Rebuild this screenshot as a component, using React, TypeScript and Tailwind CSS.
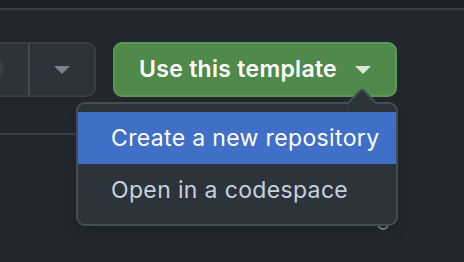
import React from 'react';

function Caret({ className }: { className?: string }) {
  return (
    <svg width="16" height="8" viewBox="0 0 16 8" className={className}>
      <path d="M0 0h16L8 8z" fill="currentColor" />
    </svg>
  );
}

export default function App() {
  return (
    <div
      className="relative w-[464px] h-[262px] overflow-hidden bg-[#22272e]"
      style={{ fontFamily: 'Inter, "Noto Sans", sans-serif' }}
    >
      <div className="h-[10px] bg-[#1c2128] border-b-2 border-[#373e47]" />

      <div className="flex items-start gap-[17px] mt-[32px] -ml-[40px]">
        {/* split button on the left */}
        <div className="flex h-[55px] w-[136px] rounded-[9px] border-2 border-[#373e47] bg-[#2d333b]">
          <div className="flex w-[68px] items-center border-r-2 border-[#444c56]">
            <div className="ml-[16px] h-[26px] w-[26px] rounded-full bg-[#373e47]" />
          </div>
          <div className="flex flex-1 items-center justify-center text-[#768390]">
            <Caret />
          </div>
        </div>

        {/* primary button */}
        <button className="flex h-[55px] w-[284px] items-center justify-center gap-[18px] rounded-[9px] border-2 border-[#5a9956] bg-[#4f8a4a] text-[23px] font-semibold tracking-[0.3px] text-white">
          <span>Use this template</span>
          <Caret className="text-[#dbe8d9] mt-[1px]" />
        </button>
      </div>

      <div className="mt-[36px] w-[100px] border-b-2 border-[#373e47]" />

      {/* small icon peeking under the menu */}
      <div className="absolute left-[377px] top-[218px] h-[12px] w-[12px] rounded-full border-2 border-[#768390]" />

      {/* dropdown menu */}
      <div className="absolute left-[76px] top-[102px] w-[322px] rounded-[9px] border-2 border-[#444c56] bg-[#2d333b] py-[8px] shadow-lg">
        <svg
          width="32"
          height="16"
          viewBox="0 0 32 16"
          className="absolute -top-[15px] right-[18px]"
        >
          <path d="M0 16L16 0l16 16z" fill="#2d333b" />
          <path d="M1 15L16 0l15 15" fill="none" stroke="#444c56" strokeWidth="2" />
        </svg>
        <div className="flex h-[52px] items-center bg-[#3f6fc6] pl-[33px] text-[23px] tracking-[0.35px] text-white">
          Create a new repository
        </div>
        <div className="flex h-[52px] items-center pl-[33px] text-[23px] tracking-[0.35px] text-[#c5d1de]">
          Open in a codespace
        </div>
      </div>
    </div>
  );
}
